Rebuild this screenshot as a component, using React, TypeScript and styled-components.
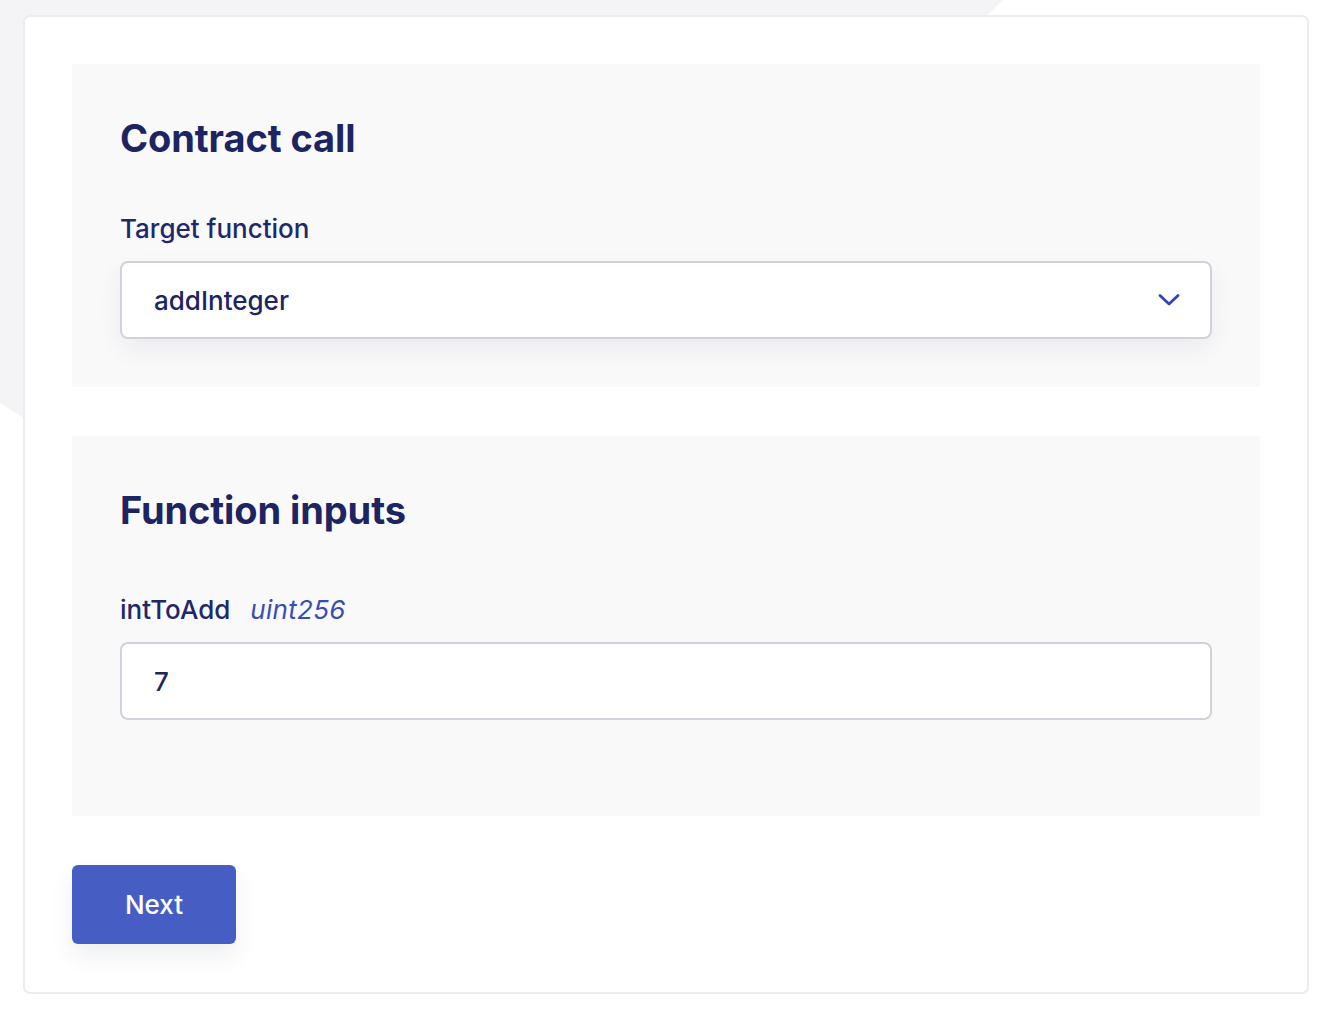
import React from "react";
import styled, { createGlobalStyle } from "styled-components";

const Global = createGlobalStyle`
  html, body { margin: 0; padding: 0; background: #ffffff; }
  body { font-family: Inter, "Noto Sans", sans-serif; -webkit-font-smoothing: antialiased; }
  * { box-sizing: border-box; }
`;

const Page = styled.div`
  position: relative;
  width: 1326px;
  min-height: 1022px;
  padding: 15px 17px 28px 23px;
`;

const Backdrop = styled.div`
  position: absolute;
  left: 0;
  top: 0;
  width: 1010px;
  height: 430px;
  background: #f4f4f7;
  clip-path: polygon(0 0, 1003px 0, 600px 400px, 22px 417px, 0 403px);
  z-index: 0;
`;

const Card = styled.div`
  position: relative;
  z-index: 1;
  width: 1286px;
  height: 979px;
  background: #ffffff;
  border: 2px solid #ececef;
  border-radius: 7px;
  padding: 47px 47px 0 47px;
  display: flex;
  flex-direction: column;
  gap: 49px;
`;

const Section = styled.section<{ $extra?: number }>`
  background: #f9f9fa;
  padding: 48px 48px ${(p) => 48 + (p.$extra ?? 0)}px 48px;
  display: flex;
  flex-direction: column;
`;

const Title = styled.h2<{ $after?: number }>`
  margin: 0 0 ${(p) => p.$after ?? 47}px 0;
  font-size: 38px;
  line-height: 52px;
  font-weight: 700;
  color: #1c2561;
  letter-spacing: -0.1px;
`;

const Label = styled.div`
  display: flex;
  align-items: baseline;
  gap: 20px;
  font-size: 26px;
  line-height: 36px;
  font-weight: 500;
  color: #1f296a;
  margin-bottom: 14px;
`;

const TypeHint = styled.span`
  font-style: italic;
  font-weight: 400;
  color: #3a4cb6;
  letter-spacing: 0.3px;
`;

const Field = styled.div<{ $shadow?: boolean }>`
  height: 78px;
  flex-shrink: 0;
  background: #ffffff;
  border: 2px solid #d0d2db;
  border-radius: 8px;
  display: flex;
  align-items: center;
  justify-content: space-between;
  padding: 0 30px 0 32px;
  font-size: 26px;
  font-weight: 500;
  color: #1c2561;
  box-shadow: ${(p) => (p.$shadow ? "0 10px 24px rgba(20, 25, 60, 0.06)" : "none")};
`;

const Chevron = styled.svg`
  width: 22px;
  height: 14px;
  color: #3346b8;
`;

const NextButton = styled.button`
  width: 164px;
  height: 79px;
  border: none;
  border-radius: 6px;
  background: #465ec4;
  color: #ffffff;
  font-family: Inter, "Noto Sans", sans-serif;
  font-size: 26px;
  font-weight: 500;
  box-shadow: 0 12px 24px rgba(20, 25, 60, 0.07);
  cursor: pointer;
`;

export default function App() {
  return (
    <Page>
      <Global />
      <Backdrop />
      <Card>
        <Section>
          <Title>Contract call</Title>
          <Label>Target function</Label>
          <Field $shadow>
            <span>addInteger</span>
            <Chevron viewBox="0 0 22 14" fill="none">
              <path d="M2 2.5 L11 11 L20 2.5" stroke="currentColor" strokeWidth="2.8" strokeLinecap="round" strokeLinejoin="round" />
            </Chevron>
          </Field>
        </Section>
        <Section $extra={48}>
          <Title $after={56}>Function inputs</Title>
          <Label>
            <span>intToAdd</span>
            <TypeHint>uint256</TypeHint>
          </Label>
          <Field>
            <span>7</span>
          </Field>
        </Section>
        <div>
          <NextButton>Next</NextButton>
        </div>
      </Card>
    </Page>
  );
}
